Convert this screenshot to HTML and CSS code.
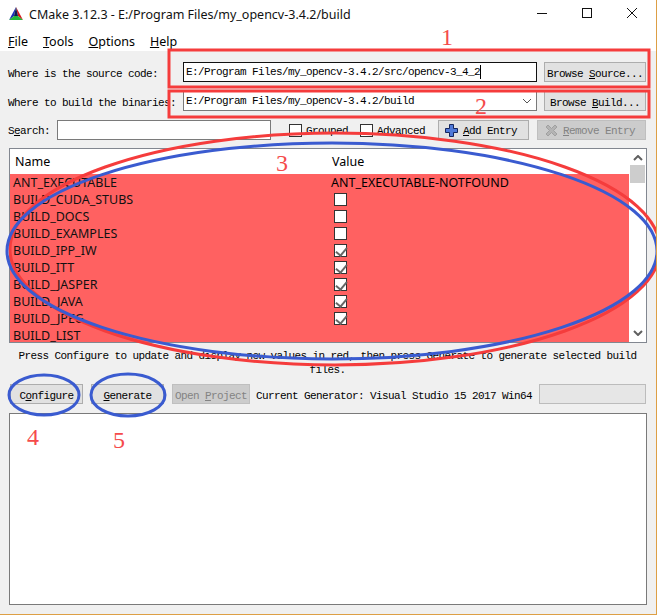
FILE: index.html

```html
<!DOCTYPE html>
<html lang="en">
<head>
<meta charset="UTF-8">
<title>CMake 3.12.3</title>
<link rel="stylesheet" href="styles.css">
</head>
<body>
<div class="window">
<div class="titlebar">
<svg class="app-icon" width="16" height="16" viewBox="0 0 16 16">
<polygon points="8,1 1,14 6,10" fill="#1c2fb8"/>
<polygon points="8,1 15,14 10,10" fill="#d8181c"/>
<polygon points="8,1 6,10 10,10" fill="#0f1a50"/>
<polygon points="1,14 15,14 10,10 6,10" fill="#26b53a"/>
</svg>
<span class="title-text">CMake 3.12.3 - E:/Program Files/my_opencv-3.4.2/build</span>
<div class="win-controls">
<svg width="14" height="14" viewBox="0 0 14 14"><path d="M2 7.5H12" stroke="#111" fill="none"/></svg>
<svg width="14" height="14" viewBox="0 0 14 14"><rect x="2.5" y="2.5" width="9" height="9" stroke="#111" fill="none"/></svg>
<svg width="14" height="14" viewBox="0 0 14 14"><path d="M2 2L12 12M12 2L2 12" stroke="#111" fill="none"/></svg>
</div>
</div>
<div class="menubar">
<span><u>F</u>ile</span>
<span><u>T</u>ools</span>
<span><u>O</u>ptions</span>
<span><u>H</u>elp</span>
</div>
<div class="main">
<div class="path-row">
<span class="label">Where is the source code:</span>
<div class="field focused">E:/Program Files/my_opencv-3.4.2/src/opencv-3_4_2<i class="caret"></i></div>
<button class="btn browse">Browse <u>S</u>ource...</button>
</div>
<div class="path-row">
<span class="label">Where to build the binaries:</span>
<div class="field combo">E:/Program Files/my_opencv-3.4.2/build
<svg class="combo-arrow" width="10" height="6" viewBox="0 0 10 6"><path d="M1 1L5 5L9 1" stroke="#555" fill="none"/></svg>
</div>
<button class="btn browse">Browse <u>B</u>uild...</button>
</div>
<div class="search-row">
<span class="search-label">S<u>e</u>arch:</span>
<div class="field search"></div>
<span class="check-label grouped"><i class="check"></i><span>Grouped</span></span>
<span class="check-label advanced"><i class="check"></i><span>Advanced</span></span>
<button class="btn add">
<svg width="15" height="15" viewBox="0 0 15 15"><path d="M5.5 1.5H9.5V5.5H13.5V9.5H9.5V13.5H5.5V9.5H1.5V5.5H5.5Z" fill="#4f79d8" stroke="#14265e"/></svg>
<span><u>A</u>dd Entry</span>
</button>
<button class="btn remove" disabled>
<svg width="15" height="15" viewBox="0 0 15 15"><path d="M2 4L4 2L7.5 5.5L11 2L13 4L9.5 7.5L13 11L11 13L7.5 9.5L4 13L2 11L5.5 7.5Z" fill="#b4b4b4" stroke="#a0a0a0"/></svg>
<span><u>R</u>emove Entry</span>
</button>
</div>
<div class="table">
<div class="table-body">
<div class="table-head"><span class="col-name">Name</span><span class="col-value">Value</span></div>
<div class="rows">
<div class="row"><span class="col-name">ANT_EXECUTABLE</span><span class="col-value">ANT_EXECUTABLE-NOTFOUND</span></div>
<div class="row"><span class="col-name">BUILD_CUDA_STUBS</span><span class="col-value"><i class="check"></i></span></div>
<div class="row"><span class="col-name">BUILD_DOCS</span><span class="col-value"><i class="check"></i></span></div>
<div class="row"><span class="col-name">BUILD_EXAMPLES</span><span class="col-value"><i class="check"></i></span></div>
<div class="row"><span class="col-name">BUILD_IPP_IW</span><span class="col-value"><i class="check on"></i></span></div>
<div class="row"><span class="col-name">BUILD_ITT</span><span class="col-value"><i class="check on"></i></span></div>
<div class="row"><span class="col-name">BUILD_JASPER</span><span class="col-value"><i class="check on"></i></span></div>
<div class="row"><span class="col-name">BUILD_JAVA</span><span class="col-value"><i class="check on"></i></span></div>
<div class="row"><span class="col-name">BUILD_JPEG</span><span class="col-value"><i class="check on"></i></span></div>
<div class="row"><span class="col-name">BUILD_LIST</span><span class="col-value"></span></div>
</div>
</div>
<div class="scrollbar">
<svg width="10" height="6" viewBox="0 0 10 6"><path d="M1 5L5 1L9 5" stroke="#606060" stroke-width="2" fill="none"/></svg>
<div class="thumb"></div>
<svg class="down" width="10" height="6" viewBox="0 0 10 6"><path d="M1 1L5 5L9 1" stroke="#606060" stroke-width="2" fill="none"/></svg>
</div>
</div>
<p class="hint">Press Configure to update and display new values in red, then press Generate to generate selected build files.</p>
<div class="action-row">
<button class="btn configure">C<u>o</u>nfigure</button>
<button class="btn generate"><u>G</u>enerate</button>
<button class="btn open" disabled>Open <u>P</u>roject</button>
<span class="generator">Current Generator: Visual Studio 15 2017 Win64</span>
<div class="progress"></div>
</div>
<div class="output"></div>
</div>

<svg class="marks" width="657" height="615" viewBox="0 0 657 615">
<rect x="169" y="50" width="480" height="37" fill="none" stroke="#f53c3c" stroke-width="3"/>
<rect x="169" y="91" width="480" height="26" fill="none" stroke="#f53c3c" stroke-width="3"/>
<ellipse cx="335" cy="249" rx="325" ry="116" fill="none" stroke="#f53c3c" stroke-width="3"/>
<ellipse cx="332" cy="251" rx="325" ry="108" fill="none" stroke="#3a5bd0" stroke-width="3"/>
<ellipse cx="44" cy="395" rx="35" ry="20" fill="none" stroke="#3a5bd0" stroke-width="3"/>
<ellipse cx="128" cy="395" rx="37" ry="21" fill="none" stroke="#3a5bd0" stroke-width="3"/>
</svg>
<span class="num n1">1</span>
<span class="num n2">2</span>
<span class="num n3">3</span>
<span class="num n4">4</span>
<span class="num n5">5</span>
</div>
</body>
</html>
```

FILE: styles.css

```css
* {
box-sizing: border-box;
}
body {
margin: 0;
background-color: #fff;
}
.window {
position: relative;
width: 657px;
height: 615px;
display: flex;
flex-direction: column;
background-color: #fff;
border-right: 1px solid #dd9f45;
border-bottom: 1px solid #dd9f45;
overflow: hidden;
font-family: "Liberation Mono", monospace;
font-size: 11px;
letter-spacing: -0.6px;
color: #000;
}
.titlebar {
height: 28px;
display: flex;
align-items: center;
padding-left: 8px;
font-family: "Noto Sans", sans-serif;
font-size: 12.5px;
letter-spacing: 0;
}
.app-icon {
margin-right: 5px;
}
.title-text {
color: #111;
}
.win-controls {
margin-left: auto;
display: flex;
gap: 31px;
padding: 0 17px 2px 0;
}
.menubar {
height: 23px;
display: flex;
gap: 15px;
padding-left: 8px;
font-family: "Noto Sans", sans-serif;
font-size: 12.5px;
letter-spacing: 0;
line-height: 27px;
}
.main {
flex: 1;
background-color: #f0f0f0;
padding: 11px 9px 9px 8px;
display: flex;
flex-direction: column;
}
.path-row {
display: flex;
align-items: center;
height: 20px;
margin-bottom: 9px;
}
.label {
width: 175px;
padding-top: 3px;
white-space: nowrap;
}
.field {
height: 20px;
background-color: #fff;
border: 1px solid #7a7a7a;
line-height: 19px;
padding-left: 2px;
white-space: nowrap;
}
.path-row .field {
width: 354px;
margin-right: 7px;
position: relative;
}
.field.focused {
border-color: #111;
}
.caret {
display: inline-block;
width: 1px;
height: 14px;
background-color: #000;
vertical-align: middle;
}
.combo-arrow {
position: absolute;
right: 4px;
top: 6px;
}
.btn {
height: 20px;
padding: 3px 0 0;
background-color: #e1e1e1;
border: 1px solid #adadad;
font: inherit;
letter-spacing: inherit;
color: #000;
white-space: nowrap;
}
.btn[disabled] {
background-color: #cccccc;
border-color: #bfbfbf;
color: #838383;
}
.browse {
width: 102px;
}
.search-row {
display: flex;
align-items: center;
height: 20px;
margin-bottom: 8px;
}
.search-label {
width: 49px;
padding-top: 2px;
}
.field.search {
width: 214px;
height: 20px;
}
.check-label {
display: flex;
align-items: center;
gap: 4px;
}
.check-label span {
padding-top: 2px;
}
.grouped {
margin-left: 18px;
width: 71px;
}
.advanced {
width: 78px;
}
.add {
width: 91px;
margin-right: 8px;
display: flex;
align-items: center;
gap: 4px;
padding: 0 0 0 5px;
}
.remove {
width: 109px;
display: flex;
align-items: center;
gap: 4px;
padding: 0 0 0 6px;
}
.add span, .remove span {
padding-top: 2px;
}
.check {
display: inline-block;
position: relative;
width: 13px;
height: 13px;
background-color: #fff;
border: 1px solid #333;
}
.check.on::after {
content: "";
position: absolute;
left: 3px;
top: 0;
width: 5px;
height: 9px;
border-right: 2px solid #666;
border-bottom: 2px solid #666;
transform: rotate(40deg);
}
.table {
height: 195px;
margin-left: 1px;
display: flex;
background-color: #fff;
border: 1px solid #828790;
font-family: "Noto Sans", sans-serif;
font-size: 12.5px;
letter-spacing: 0;
}
.table-body {
flex: 1;
min-width: 0;
display: flex;
flex-direction: column;
}
.table-head {
height: 25px;
flex-shrink: 0;
display: flex;
align-items: center;
padding-left: 5px;
}
.table-head .col-name {
width: 316px;
}
.table-head .col-value {
padding-left: 1px;
}
.rows {
flex: 1;
overflow: hidden;
background-color: #ff6161;
}
.row {
height: 17px;
display: flex;
align-items: center;
padding-left: 3px;
}
.row .col-name {
width: 318px;
white-space: nowrap;
color: #111;
}
.row .col-value {
display: flex;
align-items: center;
}
.row .check {
margin-left: 3px;
}
.scrollbar {
width: 17px;
flex-shrink: 0;
display: flex;
flex-direction: column;
align-items: center;
padding-top: 6px;
}
.thumb {
width: 15px;
height: 18px;
margin-top: 4px;
background-color: #cdcdcd;
}
.scrollbar .down {
margin-top: auto;
margin-bottom: 6px;
}
.hint {
margin: 6px 0 0;
height: 30px;
text-align: center;
line-height: 14px;
padding: 0 6px;
}
.action-row {
display: flex;
align-items: center;
height: 20px;
margin: 5px 0 9px 2px;
}
.configure {
width: 73px;
margin-right: 8px;
}
.generate {
width: 73px;
margin-right: 8px;
}
.open {
width: 78px;
margin-right: 6px;
}
.generator {
width: 283px;
padding-top: 3px;
white-space: nowrap;
}
.progress {
width: 107px;
height: 20px;
background-color: #e6e6e6;
border: 1px solid #bcbcbc;
}
.output {
height: 192px;
margin-left: 1px;
background-color: #fff;
border: 1px solid #7a7a7a;
}
.marks {
position: absolute;
left: 0;
top: 0;
pointer-events: none;
}
.num {
position: absolute;
font-family: "Liberation Serif", serif;
font-size: 24px;
line-height: 24px;
letter-spacing: 0;
color: #f54b4b;
}
.n1 { left: 441px; top: 25px; }
.n2 { left: 475px; top: 94px; }
.n3 { left: 276px; top: 151px; }
.n4 { left: 27px; top: 425px; }
.n5 { left: 113px; top: 428px; }
```
